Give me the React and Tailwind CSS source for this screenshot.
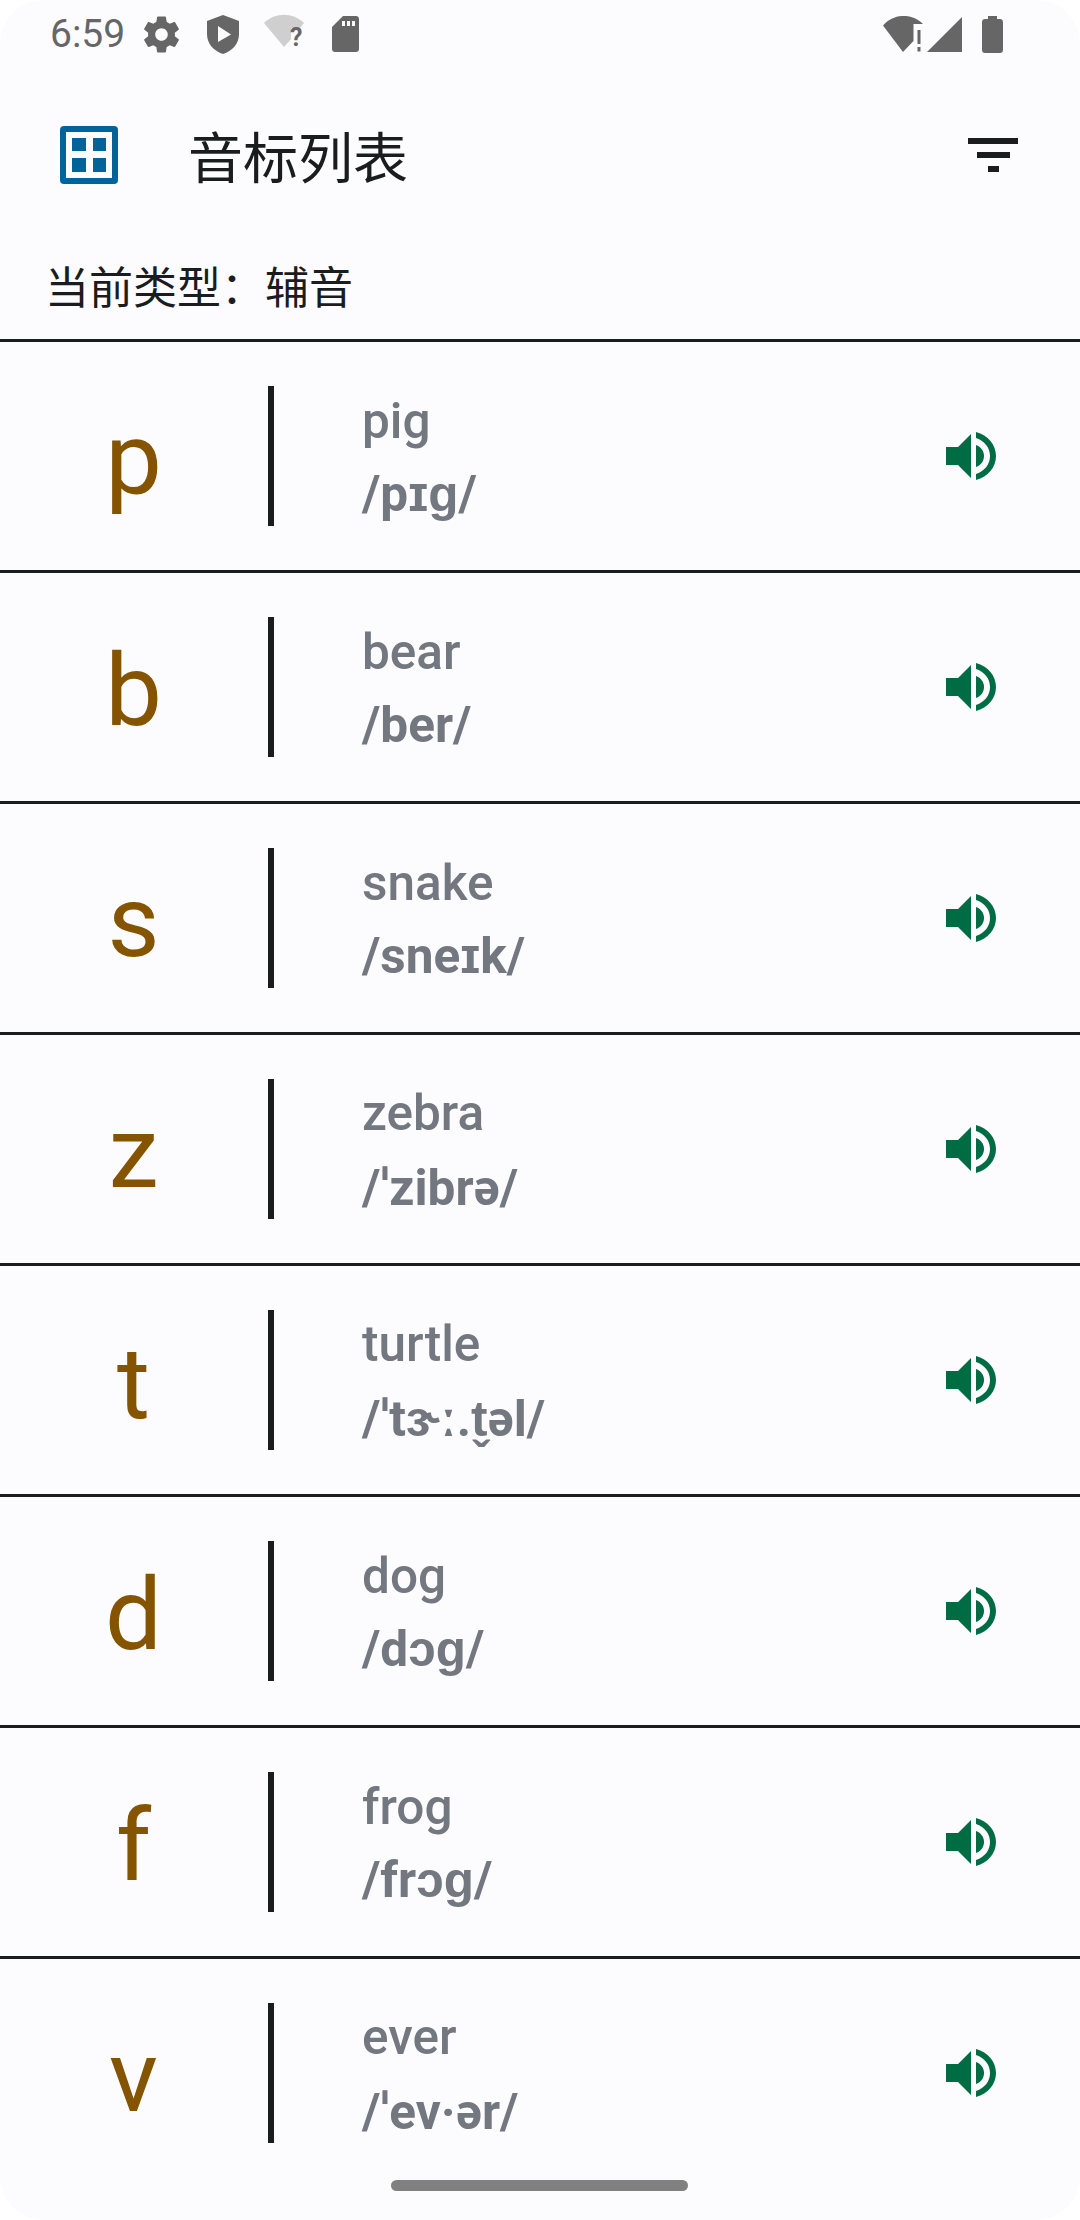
import React from "react";

const Stress = () => <span className="font-['Noto_Sans',sans-serif]">ˈ</span>;

const rows = [
  ["p", "pig", <>/pɪɡ/</>],
  ["b", "bear", <>/ber/</>],
  ["s", "snake", <>/sneɪk/</>],
  ["z", "zebra", <>/<Stress />zibrə/</>],
  ["t", "turtle", <>/<Stress />tɝː.t̬əl/</>],
  ["d", "dog", <>/dɔɡ/</>],
  ["f", "frog", <>/frɔɡ/</>],
  ["v", "ever", <>/<Stress />ev·ər/</>],
];

const Speaker = () => (
  <svg width="50" height="48" viewBox="0 0 50 48" className="block">
    <path d="M0 15H12L25 2V46L12 33H0Z" fill="#006c44" />
    <path d="M30 13C35 15 38 19 38 24C38 29 35 33 30 35Z" fill="#006c44" />
    <path d="M30 0C42 3 50 13 50 24C50 35 42 45 30 48V42C39 39 44 32 44 24C44 16 39 9 30 6Z" fill="#006c44" />
  </svg>
);

function Row({ letter, word, ipa }) {
  return (
    <div className="h-[231px] shrink-0 border-t-[3px] border-[#1a1c1e] flex items-center">
      <div className="w-[268px] shrink-0 pt-[6px] pr-[1px] text-center text-[101px] leading-none text-[#845400] font-['Roboto',sans-serif]">
        {letter}
      </div>
      <div className="w-[6px] h-[140px] shrink-0 bg-[#1a1c1e]" />
      <div className="flex-1 pl-[88px] pt-[4px] flex flex-col text-[49.5px] leading-[73px] text-[#73777f] font-['Roboto',sans-serif]">
        <div className="font-medium">{word}</div>
        <div className="font-bold whitespace-nowrap">{ipa}</div>
      </div>
      <div className="shrink-0 pr-[84px]">
        <Speaker />
      </div>
    </div>
  );
}

function StatusBar() {
  return (
    <div className="h-[68px] shrink-0 pl-[50px] pr-[77px] flex items-center justify-between text-[#666666]">
      <div className="flex items-center">
        <span className="text-[39px] leading-none font-['Roboto',sans-serif]">6:59</span>
        <svg width="43" height="43" viewBox="0 0 24 24" className="ml-[15px]" fill="#666666">
          <path d="M19.430 12.980c.040-.320.070-.640.070-.980s-.030-.660-.070-.980l2.110-1.650c.190-.150.240-.420.120-.640l-2-3.460c-.120-.220-.390-.300-.610-.220l-2.490 1c-.520-.400-1.080-.730-1.690-.980l-.380-2.650C14.460 2.180 14.250 2 14 2h-4c-.250 0-.460.180-.490.420l-.380 2.650c-.610.250-1.170.590-1.690.980l-2.490-1c-.230-.090-.490 0-.610.220l-2 3.460c-.130.220-.070.490.120.640l2.110 1.650c-.040.320-.070.650-.070.980s.030.660.070.980l-2.110 1.650c-.190.150-.240.420-.120.640l2 3.460c.120.220.390.300.610.220l2.490-1c.520.400 1.080.730 1.690.980l.380 2.650c.030.240.240.420.490.420h4c.250 0 .460-.180.490-.420l.380-2.650c.610-.250 1.170-.590 1.690-.980l2.490 1c.230.090.490 0 .610-.220l2-3.460c.120-.220.070-.490-.120-.640l-2.110-1.650zM12 15.500c-1.930 0-3.500-1.570-3.500-3.500s1.570-3.500 3.500-3.500 3.500 1.570 3.500 3.500-1.570 3.500-3.500 3.500z" />
        </svg>
        <svg width="32" height="39" viewBox="0 0 32 39" className="ml-[24px]">
          <path d="M16 0L32 6V19C32 29 25 36 16 39C7 36 0 29 0 19V6Z" fill="#666666" />
          <path d="M11 11L24 19.500L11 27Z" fill="#fcfcff" />
        </svg>
        <svg width="40" height="38" viewBox="0 0 40 38" className="ml-[25px] overflow-visible">
          <path d="M0 8C11 -3 29 -3 40 8L36 13H27V24L20 32Z" fill="#cfcfcf" />
          <text x="26" y="31" fontSize="25" fontWeight="700" fill="#666666" fontFamily="Roboto, sans-serif">?</text>
        </svg>
        <svg width="27" height="36" viewBox="0 0 27 36" className="ml-[28px]">
          <path d="M11 0H24C25.700 0 27 1.300 27 3V33C27 34.700 25.700 36 24 36H3C1.300 36 0 34.700 0 33V11Z" fill="#666666" />
          <path d="M10 5H13V10H10ZM15 5H18V10H15ZM20 5H23V10H20Z" fill="#fcfcff" />
        </svg>
      </div>
      <div className="flex items-center">
        <svg width="40" height="36" viewBox="0 0 40 36">
          <path d="M0 9.500C11 -3 29 -3 40 8H30.500V25L20 36Z" fill="#666666" />
          <path d="M34.500 14H37.500V28H34.500ZM34.500 31H37.500V35.500H34.500Z" fill="#666666" />
        </svg>
        <svg width="35" height="35" viewBox="0 0 35 35" className="ml-[4px]">
          <path d="M35 0V35H0Z" fill="#666666" />
        </svg>
        <svg width="21" height="37" viewBox="0 0 21 37" className="ml-[20px]">
          <path d="M6 0H15V3H18C19.700 3 21 4.300 21 6V34C21 35.700 19.700 37 18 37H3C1.300 37 0 35.700 0 34V6C0 4.300 1.300 3 3 3H6Z" fill="#666666" />
        </svg>
      </div>
    </div>
  );
}

export default function App() {
  return (
    <div className="relative w-[1080px] h-[2220px] bg-white overflow-hidden font-['Roboto','Noto_Sans_CJK_SC',sans-serif]">
      <div className="w-full h-full rounded-[44px] bg-[#fcfcff] overflow-hidden flex flex-col">
        <StatusBar />
        <div className="h-[173px] shrink-0 flex items-center pl-[60px] pr-[62px]">
          <div className="w-[58px] h-[58px] rounded-[4px] bg-[#00639a] p-[6px] shrink-0">
            <div className="w-full h-full bg-[#fcfcff] grid grid-cols-2 gap-[7px] p-[6px]">
              <div className="bg-[#00639a]" />
              <div className="bg-[#00639a]" />
              <div className="bg-[#00639a]" />
              <div className="bg-[#00639a]" />
            </div>
          </div>
          <div className="ml-[70px] flex-1 text-[55px] leading-none text-[#1a1c1e] font-['Noto_Sans_CJK_SC',sans-serif]">音标列表</div>
          <div className="flex flex-col items-center gap-[8px] w-[50px]">
            <div className="w-[50px] h-[6px] bg-[#1a1c1e]" />
            <div className="w-[33px] h-[6px] bg-[#1a1c1e]" />
            <div className="w-[11px] h-[6px] bg-[#1a1c1e]" />
          </div>
        </div>
        <div className="h-[98px] shrink-0 pl-[45px] pt-[14px] text-[44px] leading-[60px] text-[#1a1c1e] font-['Noto_Sans_CJK_SC',sans-serif]">{"当前类型\uFF1A辅音"}</div>
        {rows.map(([l, w, i]) => (
          <Row key={l} letter={l} word={w} ipa={i} />
        ))}
      </div>
      <div className="absolute left-[391px] top-[2180px] w-[297px] h-[11px] rounded-full bg-[#808080]" />
    </div>
  );
}
